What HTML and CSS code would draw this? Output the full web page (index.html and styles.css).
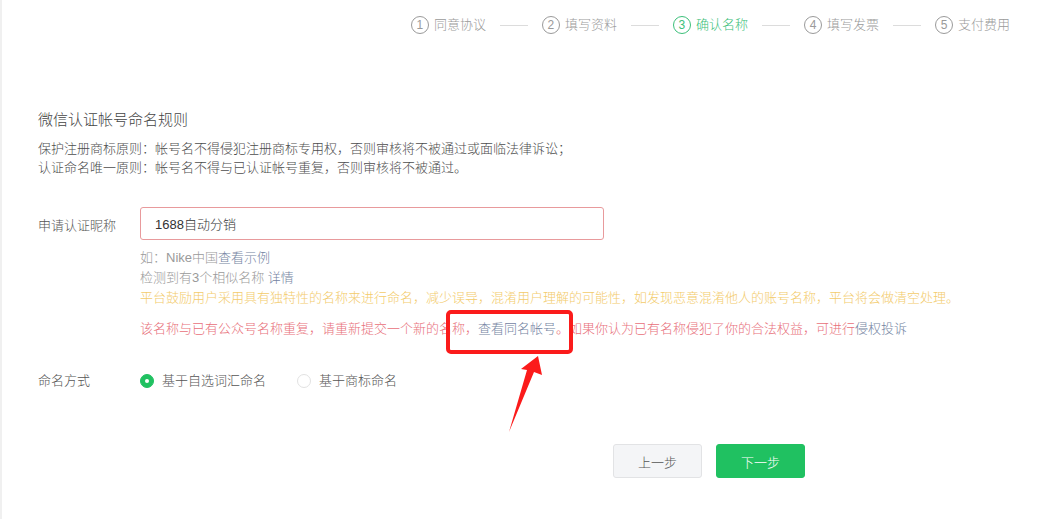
FILE: index.html
```html
<!DOCTYPE html>
<html lang="zh-CN">
  <head>
    <meta charset="UTF-8" />
    <title>微信认证</title>
    <link rel="stylesheet" href="styles.css">
  </head>
  <body>
    <div class="page">
      <ul class="steps">
        <li class="step"><span class="num">1</span>同意协议</li>
        <li class="sep"></li>
        <li class="step"><span class="num">2</span>填写资料</li>
        <li class="sep"></li>
        <li class="step active"><span class="num">3</span>确认名称</li>
        <li class="sep"></li>
        <li class="step"><span class="num">4</span>填写发票</li>
        <li class="sep"></li>
        <li class="step"><span class="num">5</span>支付费用</li>
      </ul>

      <div class="content">
        <h3 class="title">微信认证帐号命名规则</h3>
        <p class="rule">保护注册商标原则：帐号名不得侵犯注册商标专用权，否则审核将不被通过或面临法律诉讼；</p>
        <p class="rule">认证命名唯一原则：帐号名不得与已认证帐号重复，否则审核将不被通过。</p>

        <div class="form-row">
          <label class="label label-input">申请认证昵称</label>
          <div class="field">
            <input class="input error" type="text" value="1688自动分销" />
            <p class="tip">如：Nike中国<a class="link">查看示例</a></p>
            <p class="tip">检测到有3个相似名称 <a class="link">详情</a></p>
            <p class="warn">平台鼓励用户采用具有独特性的名称来进行命名，减少误导，混淆用户理解的可能性，如发现恶意混淆他人的账号名称，平台将会做清空处理。</p>
            <p class="err">该名称与已有公众号名称重复，请重新提交一个新的名称，<a class="link">查看同名帐号</a>。如果你认为已有名称侵犯了你的合法权益，可进行<a class="link">侵权投诉</a></p>
          </div>
        </div>

        <div class="form-row radio-row">
          <label class="label">命名方式</label>
          <div class="radios">
            <span class="radio checked"><i class="dot"></i>基于自选词汇命名</span>
            <span class="radio"><i class="dot"></i>基于商标命名</span>
          </div>
        </div>

        <div class="actions">
          <button class="btn btn-default">上一步</button>
          <button class="btn btn-primary">下一步</button>
        </div>
      </div>

      <svg class="mark" width="1039" height="519" viewBox="0 0 1039 519">
        <rect x="448" y="312" width="123" height="40" rx="3" fill="none" stroke="#fb1b1b" stroke-width="4" />
        <polygon points="538,356 542,375 534,372 509,432 527,370 521,369" fill="#fb1b1b" />
      </svg>
    </div>
  </body>
</html>
```

FILE: styles.css
```css
body {
  margin: 0;
  background: #fff;
  font-family: "Liberation Sans", "Noto Sans CJK SC", sans-serif;
  font-weight: 300;
  color: #444;
}
.page {
  position: relative;
  width: 1039px;
  height: 519px;
  border-left: 2px solid #f0f0f0;
  box-sizing: border-box;
  overflow: hidden;
}
.steps {
  display: flex;
  justify-content: flex-end;
  align-items: center;
  list-style: none;
  margin: 0;
  padding: 16px 29px 0 0;
  height: 18px;
}
.step {
  display: flex;
  align-items: center;
  font-size: 13px;
  line-height: 18px;
  color: #9a9a9a;
}
.num {
  display: inline-block;
  width: 16px;
  height: 16px;
  line-height: 16px;
  border: 1px solid #9a9a9a;
  border-radius: 50%;
  text-align: center;
  font-size: 12px;
  margin-right: 5px;
}
.step.active {
  color: #3cc07a;
}
.step.active .num {
  border-color: #3cc07a;
}
.sep {
  width: 28px;
  height: 1px;
  background: #dcdcdc;
  margin: 0 14px;
}
.content {
  padding-left: 36px;
}
.title {
  margin: 76px 0 9px;
  font-size: 15px;
  font-weight: 300;
  line-height: 20px;
  color: #444;
}
.rule {
  margin: 0;
  font-size: 13px;
  line-height: 19px;
  color: #4d4d4d;
}
.form-row {
  display: flex;
  margin-top: 30px;
}
.label {
  width: 102px;
  flex-shrink: 0;
  font-size: 13px;
  line-height: 20px;
  color: #555;
}
.label-input {
  padding-top: 9px;
}
.field {
  flex: 1;
}
.input {
  display: block;
  width: 464px;
  height: 33px;
  box-sizing: border-box;
  padding: 0 14px;
  border: 1px solid #e0e0e0;
  border-radius: 3px;
  font-family: inherit;
  font-weight: 300;
  font-size: 13px;
  color: #333;
  outline: none;
}
.input.error {
  border-color: #e89a9c;
}
.tip {
  margin: 0;
  font-size: 13px;
  line-height: 20px;
  color: #9a9a9a;
}
.field .tip:first-of-type {
  margin-top: 8px;
}
.link {
  color: #7383a2;
  text-decoration: none;
}
.warn {
  margin: 0;
  font-size: 13px;
  line-height: 20px;
  color: #f3cb6b;
  white-space: nowrap;
}
.err {
  margin: 11px 0 0;
  font-size: 13px;
  line-height: 20px;
  color: #e8707a;
  white-space: nowrap;
}
.radio-row {
  margin-top: 32px;
}
.radios {
  display: flex;
  align-items: center;
}
.radio {
  display: flex;
  align-items: center;
  font-size: 13px;
  line-height: 20px;
  color: #555;
  margin-right: 31px;
}
.dot {
  display: inline-block;
  width: 14px;
  height: 14px;
  box-sizing: border-box;
  border: 1px solid #e2e2e2;
  border-radius: 50%;
  margin-right: 8px;
}
.radio.checked .dot {
  background: #20c161;
  border-color: #20c161;
  position: relative;
}
.radio.checked .dot::after {
  content: "";
  position: absolute;
  left: 4px;
  top: 4px;
  width: 4px;
  height: 4px;
  border-radius: 50%;
  background: #fff;
}
.actions {
  display: flex;
  gap: 14px;
  margin-top: 53px;
  padding-left: 575px;
}
.btn {
  width: 89px;
  height: 34px;
  border-radius: 3px;
  font-family: inherit;
  font-weight: 300;
  font-size: 13px;
  cursor: pointer;
}
.btn-default {
  background: #f4f5f7;
  border: 1px solid #e2e3e5;
  color: #555;
}
.btn-primary {
  background: #20c161;
  border: 1px solid #20c161;
  color: #fff;
}
.mark {
  position: absolute;
  left: -2px;
  top: 0;
  pointer-events: none;
}
```
